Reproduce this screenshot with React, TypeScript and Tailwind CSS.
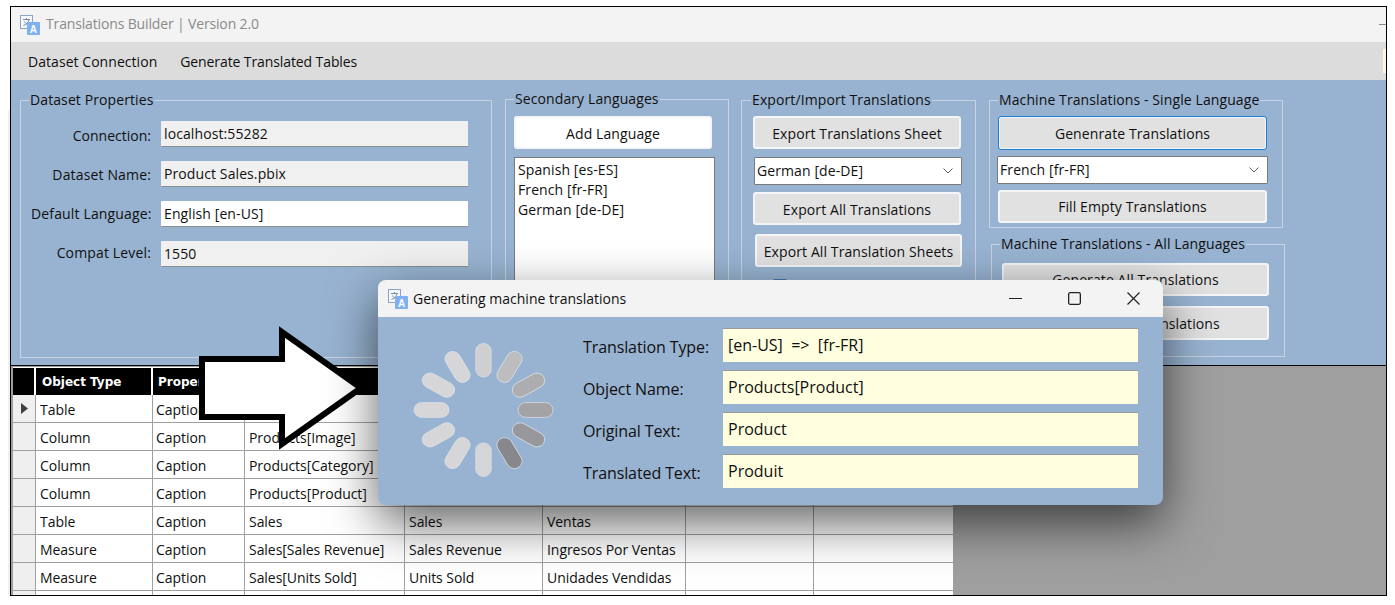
const F = "font-['Open_Sans','Noto_Sans',sans-serif]";

function TIcon({ size = 20 }: { size?: number }) {
  return (
    <svg width={size} height={size} viewBox="0 0 20 20">
      <rect x="0.5" y="0.5" width="12" height="13" fill="#f4f7fb" stroke="#8aa4c8" />
      <path d="M3 4.5h7M6.5 3v1.5M9 4.5c-.6 3-2.6 5-5.500 6M4.500 6.500c.8 1.800 2.500 3.200 4.500 4" fill="none" stroke="#6f7f96" strokeWidth="0.9" />
      <rect x="7" y="7" width="13" height="13" rx="1" fill="#7fb0ef" />
      <text x="13.500" y="17.500" textAnchor="middle" fontSize="10" fontWeight="700" fill="#fff" fontFamily="Liberation Sans, sans-serif">A</text>
    </svg>
  );
}

function Group({ title, className, legend = "ml-[8px]", children }: { title: string; className: string; legend?: string; children?: React.ReactNode }) {
  return (
    <fieldset className={`min-w-0 border border-[#c9d3df] ${className}`}>
      <legend className={`${legend} px-[1px] text-[14px] leading-[18px] text-[#101010]`}>{title}</legend>
      {children}
    </fieldset>
  );
}

function Btn({ children, className = "" }: { children: React.ReactNode; className?: string }) {
  return (
    <div className={`flex items-center justify-center rounded-[3px] border-2 border-[#f3f5f8] bg-[#e1e1e1] text-[14px] text-[#101010] ${className}`}>
      {children}
    </div>
  );
}

function Combo({ text, className }: { text: string; className: string }) {
  return (
    <div className={`flex h-[28px] items-center justify-between rounded-[1px] border border-[#7a7a7a] bg-white pb-[2px] pl-[2px] pr-[8px] text-[14px] text-[#101010] ${className}`}>
      <span>{text}</span>
      <svg className="mt-[2px]" width="10" height="6" viewBox="0 0 10 6"><path d="M0.500 0.500L5 5L9.500 0.500" fill="none" stroke="#606060" /></svg>
    </div>
  );
}

function Field({ label, value, bg, labelClass = "" }: { label: string; value: string; bg: string; labelClass?: string }) {
  return (
    <div className="flex h-[26px] items-center">
      <div className={`w-[120px] whitespace-nowrap text-right text-[14px] tracking-[0.15px] text-[#101010] ${labelClass}`}>{label}</div>
      <div className={`ml-[10px] flex h-[26px] w-[307px] items-center rounded-[1px] border-b border-b-[#8c8c8c] pl-[3px] text-[14px] text-[#101010] ${bg}`}>{value}</div>
    </div>
  );
}

const rows = [
  ["Table", "Caption", "", "", ""],
  ["Column", "Caption", "Products[Image]", "", ""],
  ["Column", "Caption", "Products[Category]", "", ""],
  ["Column", "Caption", "Products[Product]", "", ""],
  ["Table", "Caption", "Sales", "Sales", "Ventas"],
  ["Measure", "Caption", "Sales[Sales Revenue]", "Sales Revenue", "Ingresos Por Ventas"],
  ["Measure", "Caption", "Sales[Units Sold]", "Units Sold", "Unidades Vendidas"],
];
const cols = "grid grid-cols-[23px_117px_92px_160px_138px_143px_128px_140px]";
const spinner = ["#cfcfd1", "#bdbdbf", "#adadb0", "#a3a3a6", "#98989c", "#87878c", "#d5d5d7", "#d6d6d8", "#d6d6d8", "#d6d6d8", "#d6d6d8", "#d6d6d8"];

function ModalField({ label, value }: { label: string; value: string }) {
  return (
    <div className="flex h-[34px] items-center">
      <div className="w-[140px] whitespace-nowrap pt-[4px] text-[16px] tracking-[-0.1px] text-[#101010]">{label}</div>
      <div className="flex h-[34px] w-[415px] items-center whitespace-pre border-t border-t-[#9a9a9a] bg-[#ffffe0] pb-[2px] pl-[5px] text-[16px] text-[#101010]">{value}</div>
    </div>
  );
}

export default function App() {
  return (
    <div className={`${F} relative h-[605px] w-[1395px] overflow-hidden bg-white tracking-[0.1px]`}>
      <div className="absolute left-[8px] top-[110px] h-[486px] w-[2px] bg-[#f0f0f0]" />
      <div className="ml-[10px] mt-[6px] flex h-[590px] w-[1377px] flex-col overflow-hidden border border-black">
        <div className="flex h-[35px] shrink-0 items-center bg-[#f3f3f3] pl-[9px]">
          <TIcon />
          <span className="mb-[2px] ml-[6px] text-[14px] tracking-[-0.15px] text-[#8a8a8a]">Translations Builder | Version 2.0</span>
          <span className="ml-auto h-px w-[7px] bg-[#8a8a8a]" />
        </div>
        <div className="flex h-[38px] shrink-0 items-center bg-[#dcdcdc] pl-[17px] text-[14px] tracking-[0.05px] text-[#101010]">
          <span>Dataset Connection</span>
          <span className="ml-[23px] tracking-[-0.1px]">Generate Translated Tables</span>
          <span className="ml-auto h-[24px] w-[3px] bg-[#fbf7dc]" />
        </div>
        <div className="flex h-[286px] shrink-0 items-start border-b border-b-black bg-[#98b3d1] pl-[9px] pt-[11px]">
          <Group title="Dataset Properties" className="h-[267px] w-[472px]">
            <div className="mt-[12px] flex flex-col gap-[14px] pl-[10px]">
              <Field label="Connection:" value="localhost:55282" bg="bg-[#f0f0f0]" labelClass="mt-[2px] tracking-normal" />
              <Field label="Dataset Name:" value="Product Sales.pbix" bg="bg-[#f0f0f0]" />
              <Field label="Default Language:" value="English [en-US]" bg="bg-white" labelClass="-mt-[1px]" />
              <Field label="Compat Level:" value="1550" bg="bg-[#f0f0f0]" labelClass="-mt-[3px]" />
            </div>
          </Group>
          <Group title="Secondary Languages" className="-mt-[1px] ml-[13px] h-[268px] w-[224px]">
            <div className="pl-[8px] pt-[8px]">
              <Btn className="h-[33px] w-[198px] bg-white pt-[1px]">Add Language</Btn>
              <div className="mt-[8px] h-[180px] w-[201px] border border-[#7a7a7a] bg-white pl-[3px] pt-[2px] text-[14px] leading-[20px] text-[#101010]">
                <div>Spanish [es-ES]</div>
                <div>French [fr-FR]</div>
                <div>German [de-DE]</div>
              </div>
            </div>
          </Group>
          <Group title="Export/Import Translations" legend="ml-[9px]" className="ml-[12px] h-[267px] w-[235px]">
            <div className="flex flex-col pl-[11px] pt-[7px]">
              <Btn className="h-[33px] w-[208px] pt-[1px]">Export Translations Sheet</Btn>
              <Combo text="German [de-DE]" className="ml-[1px] mt-[8px] w-[208px]" />
              <Btn className="mt-[7px] h-[33px] w-[208px] pt-[2px]">Export All Translations</Btn>
              <Btn className="ml-[2px] mt-[9px] h-[33px] w-[207px] pt-[2px]">Export All Translation Sheets</Btn>
              <div className="ml-[20px] mt-[12px] h-[14px] w-[14px] rounded-[2px] bg-[#3f78b5]" />
            </div>
          </Group>
          <div className="ml-[13px] flex flex-col">
            <Group title="Machine Translations - Single Language" className="h-[137px] w-[294px]">
              <div className="flex flex-col pl-[8px] pt-[7px]">
                <Btn className="h-[34px] w-[269px] !border !border-[#1a7fd4] shadow-[inset_0_0_0_1px_#f0f5fa]">Genenrate Translations</Btn>
                <Combo text="French [fr-FR]" className="-ml-[1px] mt-[6px] w-[271px]" />
                <Btn className="mt-[6px] h-[33px] w-[269px]">Fill Empty Translations</Btn>
              </div>
            </Group>
            <Group title="Machine Translations - All Languages" className="ml-[2px] mt-[7px] h-[122px] w-[294px]">
              <div className="flex flex-col pl-[10px] pt-[10px]">
                <Btn className="h-[33px] w-[267px]">Generate All Translations</Btn>
                <Btn className="mt-[10px] h-[34px] w-[267px]">Fill All Empty Translations</Btn>
              </div>
            </Group>
          </div>
        </div>
        <div className="flex-1 overflow-hidden bg-[#9f9f9f] pl-[2px] pt-[1px]">
          <div className="w-[941px] bg-white text-[14px] tracking-[-0.05px] text-[#101010]">
            <div className={`${cols} h-[28px] border-t border-t-white bg-black font-['DejaVu_Sans',sans-serif] text-[12px] font-bold tracking-normal text-white`}>
              <div className="border-r-2 border-r-white" />
              <div className="flex items-center border-r-2 border-r-white pl-[6px]">Object Type</div>
              <div className="flex items-center pl-[5px]">Property</div>
              <div /><div /><div /><div /><div />
            </div>
            {[...rows, ["", "", "", "", ""]].map((r, i) => (
              <div key={i} className={`${cols} h-[28px]`}>
                <div className="flex items-center justify-center border-b border-r border-[#a0a0a0] bg-[#efefef]">
                  {i === 0 && <svg width="7" height="11" viewBox="0 0 7 11"><path d="M0 0L7 5.500L0 11Z" fill="#404040" /></svg>}
                </div>
                {[0, 1, 2, 3, 4, 5, 6].map((c) => (
                  <div key={c} className={`flex items-center whitespace-nowrap border-b border-r border-[#a0a0a0] pt-[1px] ${c === 1 ? "pl-[3px]" : "pl-[4px]"}`}>
                    {r[c] ?? ""}
                  </div>
                ))}
              </div>
            ))}
          </div>
        </div>
      </div>

      <svg className="absolute left-[197px] top-[322px]" width="175" height="132" viewBox="197 322 175 132">
        <path d="M202 359H282V332L361 388L282 444V417H202Z" fill="#fff" stroke="#000" strokeWidth="6" />
      </svg>

      <div className="absolute left-[378px] top-[280px] h-[225px] w-[785px] overflow-hidden rounded-[8px] bg-[#98b3d1] tracking-normal shadow-[0_18px_50px_rgba(0,0,0,0.62)]">
        <div className="flex h-[37px] items-center bg-[#f3f3f3] pl-[10px] text-[14px] text-[#101010]">
          <TIcon />
          <span className="ml-[5px]">Generating machine translations</span>
          <div className="ml-auto flex items-center gap-[46px] pr-[23px]">
            <svg width="13" height="13" viewBox="0 0 13 13"><path d="M0 6.500H13" stroke="#222" /></svg>
            <svg width="13" height="13" viewBox="0 0 13 13"><rect x="0.650" y="0.650" width="11.700" height="11.700" rx="1.500" fill="none" stroke="#222" strokeWidth="1.300" /></svg>
            <svg width="13" height="13" viewBox="0 0 13 13"><path d="M0.500 0.500L12.500 12.500M12.500 0.500L0.500 12.500" stroke="#222" strokeWidth="1.200" /></svg>
          </div>
        </div>
        <div className="flex">
          <svg className="ml-[35px] mt-[23px]" width="141" height="140" viewBox="-70.500 -70 141 140">
            <g transform="scale(1.030 0.985)">
              {spinner.map((c, i) => (
                <rect key={i} x="-7.500" y="-67.500" width="15" height="34" rx="7.500" fill={c} stroke="#dfe3e8" strokeWidth="0.7" transform={`rotate(${i * 30})`} />
              ))}
            </g>
          </svg>
          <div className="ml-[29px] mt-[11px] flex flex-col gap-[8px]">
            <ModalField label="Translation Type:" value="[en-US]  =>  [fr-FR]" />
            <ModalField label="Object Name:" value="Products[Product]" />
            <ModalField label="Original Text:" value="Product" />
            <ModalField label="Translated Text:" value="Produit" />
          </div>
        </div>
      </div>
    </div>
  );
}
